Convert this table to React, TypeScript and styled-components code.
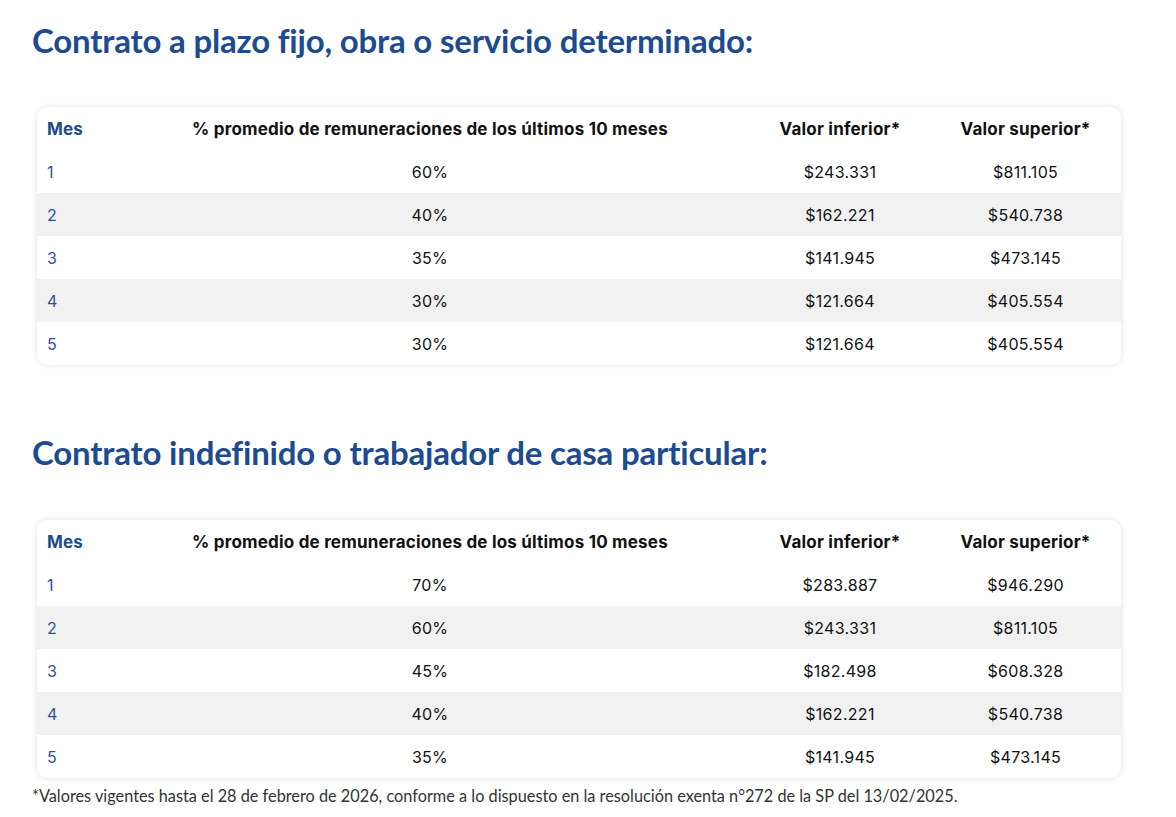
import React from "react"
import styled, { createGlobalStyle } from "styled-components"

type Row = [string, string, string, string]

const fijo: Row[] = [
  ["1", "60%", "$243.331", "$811.105"],
  ["2", "40%", "$162.221", "$540.738"],
  ["3", "35%", "$141.945", "$473.145"],
  ["4", "30%", "$121.664", "$405.554"],
  ["5", "30%", "$121.664", "$405.554"],
]

const indefinido: Row[] = [
  ["1", "70%", "$283.887", "$946.290"],
  ["2", "60%", "$243.331", "$811.105"],
  ["3", "45%", "$182.498", "$608.328"],
  ["4", "40%", "$162.221", "$540.738"],
  ["5", "35%", "$141.945", "$473.145"],
]

const ValuesTable = ({ rows }: { rows: Row[] }) => (
  <Card>
    <Table>
      <colgroup>
        <col style={{ width: 73 }} />
        <col style={{ width: 640 }} />
        <col style={{ width: 180 }} />
        <col />
      </colgroup>
      <thead>
        <tr>
          <MonthHead>Mes</MonthHead>
          <Head>% promedio de remuneraciones de los últimos 10 meses</Head>
          <Head>Valor inferior*</Head>
          <Head>Valor superior*</Head>
        </tr>
      </thead>
      <tbody>
        {rows.map((r) => (
          <BodyRow key={r[0]}>
            <MonthCell>{r[0]}</MonthCell>
            <Cell>{r[1]}</Cell>
            <Cell>{r[2]}</Cell>
            <Cell>{r[3]}</Cell>
          </BodyRow>
        ))}
      </tbody>
    </Table>
  </Card>
)

export default function App() {
  return (
    <>
      <GlobalStyle />
      <Page>
        <Title>Contrato a plazo fijo, obra o servicio determinado:</Title>
        <ValuesTable rows={fijo} />
        <Title $second>Contrato indefinido o trabajador de casa particular:</Title>
        <ValuesTable rows={indefinido} />
        <Note>
          *Valores vigentes hasta el 28 de febrero de 2026, conforme a lo dispuesto en la resolución exenta
          n°272 de la SP del 13/02/2025.
        </Note>
      </Page>
    </>
  )
}

const GlobalStyle = createGlobalStyle`
  body {
    margin: 0;
    background: #ffffff;
  }
`

const Page = styled.div({
  padding: "14px 55px 0 32px",
  display: "flex",
  flexDirection: "column",
})

const Title = styled.h2<{ $second?: boolean }>`
  font-family: Lato, "Liberation Sans", sans-serif;
  font-weight: 700;
  font-size: 33px;
  line-height: 52px;
  color: #1d4b8f;
  margin: ${(p) => (p.$second ? "61px 0 42px 0" : "0 0 41px 0")};
  letter-spacing: -0.2px;
`

const Card = styled.div({
  marginLeft: 5,
  background: "#ffffff",
  borderRadius: 10,
  boxShadow: "0 0 6px rgba(0, 0, 0, 0.12)",
  overflow: "hidden",
})

const Table = styled.table({
  width: "100%",
  borderCollapse: "collapse",
  tableLayout: "fixed",
  fontFamily: "Inter, 'Noto Sans', sans-serif",
  fontSize: 16,
  letterSpacing: 0.3,
  color: "#111111",
})

const Head = styled.th({
  height: 43,
  padding: "0 10px",
  fontSize: 17,
  fontWeight: 700,
  letterSpacing: 0.2,
  textAlign: "center",
  color: "#111111",
  whiteSpace: "nowrap",
})

const MonthHead = styled(Head)({
  textAlign: "left",
  color: "#1d4b8f",
})

const BodyRow = styled.tr`
  &:nth-child(even) {
    background: #f1f1f1;
  }
`

const Cell = styled.td({
  height: 43,
  padding: "0 10px",
  textAlign: "center",
  fontWeight: 400,
})

const MonthCell = styled(Cell)({
  textAlign: "left",
  color: "#2c5398",
})

const Note = styled.p({
  margin: "8px 0 0 0",
  fontFamily: "Lato, 'Liberation Sans', sans-serif",
  fontSize: 16.3,
  lineHeight: "20px",
  color: "#333333",
  whiteSpace: "nowrap",
})
